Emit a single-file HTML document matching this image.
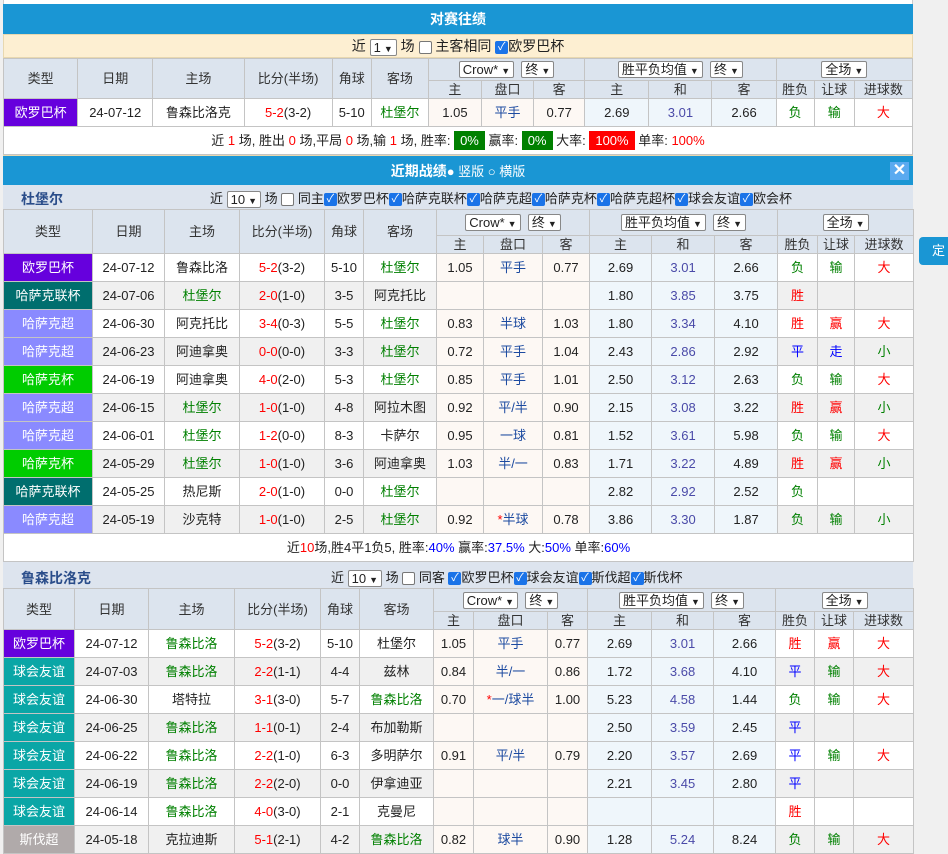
<!DOCTYPE html>
<html><head><meta charset="utf-8"><style>
*{box-sizing:border-box;margin:0;padding:0}
body{width:948px;height:839px;overflow:hidden;background:#f0f0f0;font-family:"Liberation Sans","Noto Sans CJK SC",sans-serif;font-size:13px;color:#222;position:relative}
#wrap{position:absolute;left:3px;top:0;width:910px;background:#fff}
.top{height:4px;background:#fff;border-left:1px solid #ccc;border-right:1px solid #ccc}
.bar{background:#1a96d4;color:#fff;font-weight:bold;text-align:center;font-size:14px}
table{border-collapse:collapse;table-layout:fixed;width:910px}
td{border:1px solid #c4c4c4;text-align:center;white-space:nowrap;overflow:hidden;padding:0;line-height:15px}
.hd td{background:#dce4ee;color:#333}
tr.d td{height:28px}
tr.g td{background:#f0f0f0}
td.o{background:#fdf8f4!important}
td.e{background:#eff6fb!important}
td.c{color:#fff!important}
.gr{color:#008000}.rd{color:#f00}.bl{color:#00f}.pk{color:#1c4aa0}.he{color:#4a4aa8}
.sel{display:inline-block;border:1px solid #888;border-radius:2px;background:#fff;padding:0 3px;height:17px;line-height:15px;font-size:13px;color:#222;vertical-align:middle}
.sel b{font-size:9px;margin-left:3px}
.cb{display:inline-block;width:13px;height:13px;border:1px solid #777;border-radius:2px;background:#fff;vertical-align:middle}
.ck{display:inline-block;width:13px;height:13px;border-radius:2px;background:#1a73e8;color:#fff;font-size:11px;line-height:13px;text-align:center;vertical-align:middle}
.sub{background:#dde4ee;height:24px;position:relative;font-size:13px}
.sub .t{position:absolute;left:18px;top:4px;color:#2a4d8a;font-weight:bold;font-size:14px}
.sub .f{position:absolute;top:3px}
.pct{display:inline-block;color:#fff;padding:0 6px;line-height:19px}
</style></head><body>
<div id="wrap">
<div class="top"></div>
<div class="bar" style="height:30px;line-height:30px">对赛往绩</div>
<div style="background:#fdefd2;height:24px;line-height:22px;text-align:center;font-size:14px;border:1px solid #e8d8b0">近 <span class="sel">1<b>&#9660;</b></span> 场 <span class="cb"></span> 主客相同 <span class="ck">✓</span>欧罗巴杯</div>
<table>
<colgroup><col style="width:74px"><col style="width:75px"><col style="width:91px"><col style="width:88px"><col style="width:39px"><col style="width:57px"><col style="width:53px"><col style="width:52px"><col style="width:51px"><col style="width:64px"><col style="width:63px"><col style="width:64px"><col style="width:38px"><col style="width:40px"><col style="width:58px"></colgroup>
<tr class="hd"><td rowspan="2">类型</td><td rowspan="2">日期</td><td rowspan="2">主场</td><td rowspan="2">比分(半场)</td><td rowspan="2">角球</td><td rowspan="2">客场</td><td colspan="3" style="height:22px"><span class="sel">Crow*<b>&#9660;</b></span> &nbsp;<span class="sel">终<b>&#9660;</b></span></td><td colspan="3"><span class="sel">胜平负均值<b>&#9660;</b></span> &nbsp;<span class="sel">终<b>&#9660;</b></span></td><td colspan="3"><span class="sel">全场<b>&#9660;</b></span></td></tr>
<tr class="hd"><td style="height:18px">主</td><td>盘口</td><td>客</td><td>主</td><td>和</td><td>客</td><td>胜负</td><td>让球</td><td>进球数</td></tr>
<tr class="d"><td class="c" style="background:#6600dd">欧罗巴杯</td><td>24-07-12</td><td>鲁森比洛克</td><td><span class="rd">5-2</span>(3-2)</td><td>5-10</td><td class="gr">杜堡尔</td><td class="o">1.05</td><td class="o pk">平手</td><td class="o">0.77</td><td class="e">2.69</td><td class="e he">3.01</td><td class="e">2.66</td><td class="gr">负</td><td class="gr">输</td><td class="rd">大</td></tr>
<tr><td colspan="15" style="height:28px">近 <span class="rd">1</span> 场, 胜出 <span class="rd">0</span> 场,平局 <span class="rd">0</span> 场,输 <span class="rd">1</span> 场, 胜率: <span class="pct" style="background:#008000">0%</span> 赢率: <span class="pct" style="background:#008000">0%</span> 大率: <span class="pct" style="background:#f00">100%</span> 单率: <span class="rd">100%</span></td></tr>
</table>
<div class="bar" style="height:30px;line-height:30px;position:relative;border-top:1px solid #e8d8b0">近期战绩<span style="font-weight:normal;font-size:13px">● 竖版 ○ 横版</span><span style="position:absolute;right:4px;top:6px;width:19px;height:18px;background:#5aaaf0;line-height:18px;font-size:16px">✕</span></div>
<div class="sub"><span class="t">杜堡尔</span><span class="f" style="left:207px">近 <span class="sel">10<b>&#9660;</b></span> 场 <span class="cb"></span> 同主<span class="ck">✓</span>欧罗巴杯<span class="ck">✓</span>哈萨克联杯<span class="ck">✓</span>哈萨克超<span class="ck">✓</span>哈萨克杯<span class="ck">✓</span>哈萨克超杯<span class="ck">✓</span>球会友谊<span class="ck">✓</span>欧会杯</span></div>
<table>
<colgroup><col style="width:89px"><col style="width:72px"><col style="width:75px"><col style="width:85px"><col style="width:39px"><col style="width:73px"><col style="width:47px"><col style="width:59px"><col style="width:47px"><col style="width:62px"><col style="width:63px"><col style="width:63px"><col style="width:40px"><col style="width:37px"><col style="width:59px"></colgroup>
<tr class="hd"><td rowspan="2">类型</td><td rowspan="2">日期</td><td rowspan="2">主场</td><td rowspan="2">比分(半场)</td><td rowspan="2">角球</td><td rowspan="2">客场</td><td colspan="3" style="height:26px"><span class="sel">Crow*<b>&#9660;</b></span> &nbsp;<span class="sel">终<b>&#9660;</b></span></td><td colspan="3"><span class="sel">胜平负均值<b>&#9660;</b></span> &nbsp;<span class="sel">终<b>&#9660;</b></span></td><td colspan="3"><span class="sel">全场<b>&#9660;</b></span></td></tr>
<tr class="hd"><td style="height:18px">主</td><td>盘口</td><td>客</td><td>主</td><td>和</td><td>客</td><td>胜负</td><td>让球</td><td>进球数</td></tr>
<tr class="d"><td class="c" style="background:#6600dd">欧罗巴杯</td><td>24-07-12</td><td>鲁森比洛</td><td><span class="rd">5-2</span>(3-2)</td><td>5-10</td><td class="gr">杜堡尔</td><td class="o">1.05</td><td class="o pk">平手</td><td class="o">0.77</td><td class="e">2.69</td><td class="e he">3.01</td><td class="e">2.66</td><td class="gr">负</td><td class="gr">输</td><td class="rd">大</td></tr>
<tr class="d g"><td class="c" style="background:#006e6e">哈萨克联杯</td><td>24-07-06</td><td class="gr">杜堡尔</td><td><span class="rd">2-0</span>(1-0)</td><td>3-5</td><td>阿克托比</td><td class="o"></td><td class="o"></td><td class="o"></td><td class="e">1.80</td><td class="e he">3.85</td><td class="e">3.75</td><td class="rd">胜</td><td></td><td></td></tr>
<tr class="d"><td class="c" style="background:#8a8aff">哈萨克超</td><td>24-06-30</td><td>阿克托比</td><td><span class="rd">3-4</span>(0-3)</td><td>5-5</td><td class="gr">杜堡尔</td><td class="o">0.83</td><td class="o pk">半球</td><td class="o">1.03</td><td class="e">1.80</td><td class="e he">3.34</td><td class="e">4.10</td><td class="rd">胜</td><td class="rd">赢</td><td class="rd">大</td></tr>
<tr class="d g"><td class="c" style="background:#8a8aff">哈萨克超</td><td>24-06-23</td><td>阿迪拿奥</td><td><span class="rd">0-0</span>(0-0)</td><td>3-3</td><td class="gr">杜堡尔</td><td class="o">0.72</td><td class="o pk">平手</td><td class="o">1.04</td><td class="e">2.43</td><td class="e he">2.86</td><td class="e">2.92</td><td class="bl">平</td><td class="bl">走</td><td class="gr">小</td></tr>
<tr class="d"><td class="c" style="background:#00cc00">哈萨克杯</td><td>24-06-19</td><td>阿迪拿奥</td><td><span class="rd">4-0</span>(2-0)</td><td>5-3</td><td class="gr">杜堡尔</td><td class="o">0.85</td><td class="o pk">平手</td><td class="o">1.01</td><td class="e">2.50</td><td class="e he">3.12</td><td class="e">2.63</td><td class="gr">负</td><td class="gr">输</td><td class="rd">大</td></tr>
<tr class="d g"><td class="c" style="background:#8a8aff">哈萨克超</td><td>24-06-15</td><td class="gr">杜堡尔</td><td><span class="rd">1-0</span>(1-0)</td><td>4-8</td><td>阿拉木图</td><td class="o">0.92</td><td class="o pk">平/半</td><td class="o">0.90</td><td class="e">2.15</td><td class="e he">3.08</td><td class="e">3.22</td><td class="rd">胜</td><td class="rd">赢</td><td class="gr">小</td></tr>
<tr class="d"><td class="c" style="background:#8a8aff">哈萨克超</td><td>24-06-01</td><td class="gr">杜堡尔</td><td><span class="rd">1-2</span>(0-0)</td><td>8-3</td><td>卡萨尔</td><td class="o">0.95</td><td class="o pk">一球</td><td class="o">0.81</td><td class="e">1.52</td><td class="e he">3.61</td><td class="e">5.98</td><td class="gr">负</td><td class="gr">输</td><td class="rd">大</td></tr>
<tr class="d g"><td class="c" style="background:#00cc00">哈萨克杯</td><td>24-05-29</td><td class="gr">杜堡尔</td><td><span class="rd">1-0</span>(1-0)</td><td>3-6</td><td>阿迪拿奥</td><td class="o">1.03</td><td class="o pk">半/一</td><td class="o">0.83</td><td class="e">1.71</td><td class="e he">3.22</td><td class="e">4.89</td><td class="rd">胜</td><td class="rd">赢</td><td class="gr">小</td></tr>
<tr class="d"><td class="c" style="background:#006e6e">哈萨克联杯</td><td>24-05-25</td><td>热尼斯</td><td><span class="rd">2-0</span>(1-0)</td><td>0-0</td><td class="gr">杜堡尔</td><td class="o"></td><td class="o"></td><td class="o"></td><td class="e">2.82</td><td class="e he">2.92</td><td class="e">2.52</td><td class="gr">负</td><td></td><td></td></tr>
<tr class="d g"><td class="c" style="background:#8a8aff">哈萨克超</td><td>24-05-19</td><td>沙克特</td><td><span class="rd">1-0</span>(1-0)</td><td>2-5</td><td class="gr">杜堡尔</td><td class="o">0.92</td><td class="o pk"><span class="rd">*</span>半球</td><td class="o">0.78</td><td class="e">3.86</td><td class="e he">3.30</td><td class="e">1.87</td><td class="gr">负</td><td class="gr">输</td><td class="gr">小</td></tr>
<tr><td colspan="15" style="height:28px">近<span class="rd">10</span>场,胜4平1负5, 胜率:<span class="bl">40%</span> 赢率:<span class="bl">37.5%</span> 大:<span class="bl">50%</span> 单率:<span class="bl">60%</span></td></tr>
</table>
<div style="height:2px;background:#dde4ee"></div>
<div class="sub" style="height:24px"><span class="t" style="left:18px">鲁森比洛克</span><span class="f" style="left:328px">近 <span class="sel">10<b>&#9660;</b></span> 场 <span class="cb"></span> 同客 <span class="ck">✓</span>欧罗巴杯<span class="ck">✓</span>球会友谊<span class="ck">✓</span>斯伐超<span class="ck">✓</span>斯伐杯</span></div>
<table>
<colgroup><col style="width:71px"><col style="width:74px"><col style="width:86px"><col style="width:86px"><col style="width:39px"><col style="width:74px"><col style="width:40px"><col style="width:74px"><col style="width:40px"><col style="width:64px"><col style="width:62px"><col style="width:62px"><col style="width:39px"><col style="width:39px"><col style="width:60px"></colgroup>
<tr class="hd"><td rowspan="2">类型</td><td rowspan="2">日期</td><td rowspan="2">主场</td><td rowspan="2">比分(半场)</td><td rowspan="2">角球</td><td rowspan="2">客场</td><td colspan="3" style="height:23px"><span class="sel">Crow*<b>&#9660;</b></span> &nbsp;<span class="sel">终<b>&#9660;</b></span></td><td colspan="3"><span class="sel">胜平负均值<b>&#9660;</b></span> &nbsp;<span class="sel">终<b>&#9660;</b></span></td><td colspan="3"><span class="sel">全场<b>&#9660;</b></span></td></tr>
<tr class="hd"><td style="height:18px">主</td><td>盘口</td><td>客</td><td>主</td><td>和</td><td>客</td><td>胜负</td><td>让球</td><td>进球数</td></tr>
<tr class="d"><td class="c" style="background:#6600dd">欧罗巴杯</td><td>24-07-12</td><td class="gr">鲁森比洛</td><td><span class="rd">5-2</span>(3-2)</td><td>5-10</td><td>杜堡尔</td><td class="o">1.05</td><td class="o pk">平手</td><td class="o">0.77</td><td class="e">2.69</td><td class="e he">3.01</td><td class="e">2.66</td><td class="rd">胜</td><td class="rd">赢</td><td class="rd">大</td></tr>
<tr class="d g"><td class="c" style="background:#0aa6a6">球会友谊</td><td>24-07-03</td><td class="gr">鲁森比洛</td><td><span class="rd">2-2</span>(1-1)</td><td>4-4</td><td>兹林</td><td class="o">0.84</td><td class="o pk">半/一</td><td class="o">0.86</td><td class="e">1.72</td><td class="e he">3.68</td><td class="e">4.10</td><td class="bl">平</td><td class="gr">输</td><td class="rd">大</td></tr>
<tr class="d"><td class="c" style="background:#0aa6a6">球会友谊</td><td>24-06-30</td><td>塔特拉</td><td><span class="rd">3-1</span>(3-0)</td><td>5-7</td><td class="gr">鲁森比洛</td><td class="o">0.70</td><td class="o pk"><span class="rd">*</span>一/球半</td><td class="o">1.00</td><td class="e">5.23</td><td class="e he">4.58</td><td class="e">1.44</td><td class="gr">负</td><td class="gr">输</td><td class="rd">大</td></tr>
<tr class="d g"><td class="c" style="background:#0aa6a6">球会友谊</td><td>24-06-25</td><td class="gr">鲁森比洛</td><td><span class="rd">1-1</span>(0-1)</td><td>2-4</td><td>布加勒斯</td><td class="o"></td><td class="o"></td><td class="o"></td><td class="e">2.50</td><td class="e he">3.59</td><td class="e">2.45</td><td class="bl">平</td><td></td><td></td></tr>
<tr class="d"><td class="c" style="background:#0aa6a6">球会友谊</td><td>24-06-22</td><td class="gr">鲁森比洛</td><td><span class="rd">2-2</span>(1-0)</td><td>6-3</td><td>多明萨尔</td><td class="o">0.91</td><td class="o pk">平/半</td><td class="o">0.79</td><td class="e">2.20</td><td class="e he">3.57</td><td class="e">2.69</td><td class="bl">平</td><td class="gr">输</td><td class="rd">大</td></tr>
<tr class="d g"><td class="c" style="background:#0aa6a6">球会友谊</td><td>24-06-19</td><td class="gr">鲁森比洛</td><td><span class="rd">2-2</span>(2-0)</td><td>0-0</td><td>伊拿迪亚</td><td class="o"></td><td class="o"></td><td class="o"></td><td class="e">2.21</td><td class="e he">3.45</td><td class="e">2.80</td><td class="bl">平</td><td></td><td></td></tr>
<tr class="d"><td class="c" style="background:#0aa6a6">球会友谊</td><td>24-06-14</td><td class="gr">鲁森比洛</td><td><span class="rd">4-0</span>(3-0)</td><td>2-1</td><td>克曼尼</td><td class="o"></td><td class="o"></td><td class="o"></td><td class="e"></td><td class="e"></td><td class="e"></td><td class="rd">胜</td><td></td><td></td></tr>
<tr class="d g"><td class="c" style="background:#b0aaaa">斯伐超</td><td>24-05-18</td><td>克拉迪斯</td><td><span class="rd">5-1</span>(2-1)</td><td>4-2</td><td class="gr">鲁森比洛</td><td class="o">0.82</td><td class="o pk">球半</td><td class="o">0.90</td><td class="e">1.28</td><td class="e he">5.24</td><td class="e">8.24</td><td class="gr">负</td><td class="gr">输</td><td class="rd">大</td></tr>
</table>
</div>
<div style="position:absolute;left:919px;top:237px;width:40px;height:28px;background:#1a96d4;border-radius:4px;color:#fff;line-height:28px;padding-left:13px;font-size:13px">定</div>
</body></html>
